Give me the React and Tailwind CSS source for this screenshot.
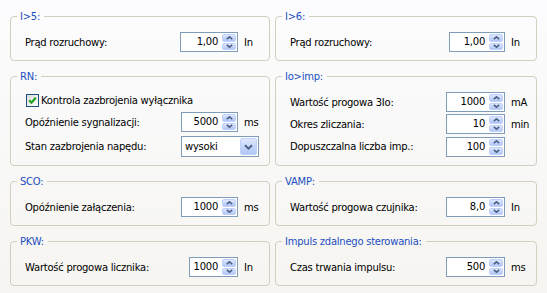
import React from 'react';

// XP-style settings panel: two columns of group boxes with spin fields

const font = { fontFamily: 'Tahoma, "DejaVu Sans", "Liberation Sans", sans-serif' };

const Arrow = ({ down }) => (
    <svg width="7" height="4" viewBox="0 0 7 4" className="block">
        <path
            d={down ? 'M0.8 0.8 L3.5 3.2 L6.2 0.8' : 'M0.8 3.2 L3.5 0.8 L6.2 3.2'}
            fill="none"
            stroke="#4d6185"
            strokeWidth="1.6"
        />
    </svg>
);

const SpinBtn = ({ down }) => (
    <div className="flex flex-1 items-center justify-center rounded-[2px] border border-[#bfd0fa] bg-linear-to-b from-[#dde7fe] to-[#b1c6f7]">
        <Arrow down={down} />
    </div>
);

const Spin = ({ value, width }) => (
    <div className={`flex h-[20px] shrink-0 border border-[#7f9db9] bg-white ${width}`}>
        <div className="flex-1 pr-[4px] text-right leading-[18px]">{value}</div>
        <div className="flex w-[15px] flex-col gap-[1px] py-[1px] pr-[1px]">
            <SpinBtn />
            <SpinBtn down />
        </div>
    </div>
);

// one label / field / unit row
const Row = ({ label, value, width, unit }) => (
    <div className="flex h-[20px] items-center">
        <span className="flex-1">{label}</span>
        <Spin value={value} width={width} />
        <span className="w-[31px] pl-[6px]">{unit}</span>
    </div>
);

const Group = ({ title, gap = 'gap-[3px]', children }) => (
    <fieldset className="rounded-[4px] border border-[#d0d0bf]">
        <legend className="ml-[6px] pl-[3px] pr-[4px] leading-[13px] text-[#1c4fc0]">{title}</legend>
        <div className={`flex flex-col pb-[8px] pl-[14px] pt-[9px] ${gap}`}>{children}</div>
    </fieldset>
);

const Check = () => (
    <div className="flex h-[13px] w-[13px] items-center justify-center border border-[#1c5180] bg-linear-to-br from-[#dcdcd7] to-white">
        <svg width="9" height="9" viewBox="0 0 9 9" className="block">
            <path d="M1.2 4.3 L3.5 6.7 L7.8 1.8" fill="none" stroke="#21a121" strokeWidth="2.2" />
        </svg>
    </div>
);

const Select = ({ value }) => (
    <div className="flex h-[21px] w-[78px] shrink-0 border border-[#7f9db9] bg-white">
        <span className="flex-1 pl-[3px] leading-[19px]">{value}</span>
        <div className="m-[1px] flex w-[17px] items-center justify-center rounded-[2px] border border-[#bfd0fa] bg-linear-to-b from-[#dde7fe] to-[#b1c6f7]">
            <svg width="9" height="6" viewBox="0 0 9 6" className="block">
                <path d="M1 1.2 L4.5 4.6 L8 1.2" fill="none" stroke="#4d6185" strokeWidth="2" />
            </svg>
        </div>
    </div>
);

export default function App() {
    return (
        <div
            className="h-[293px] w-[547px] overflow-hidden bg-linear-to-b from-[#fcfcfe] to-[#f6f5f1] pl-[10px] pt-[10px] text-[10px] tracking-[-0.25px] text-black"
            style={font}
        >
            <div className="grid grid-cols-[260px_262px] gap-x-[5px]">
                {/* left column */}
                <div className="flex flex-col gap-[9px]">
                    <Group title="I>5:">
                        <Row label="Prąd rozruchowy:" value="1,00" width="w-[58px]" unit="In" />
                    </Group>
                    <Group title="RN:" gap="gap-[4px]">
                        <div className="-mb-[1px] flex h-[17px] items-center gap-[2px] pl-[1px]">
                            <Check />
                            <span>Kontrola zazbrojenia wyłącznika</span>
                        </div>
                        <Row label="Opóźnienie sygnalizacji:" value="5000" width="w-[57px]" unit="ms" />
                        <div className="flex h-[21px] items-center pr-[10px]">
                            <span className="flex-1">Stan zazbrojenia napędu:</span>
                            <Select value="wysoki" />
                        </div>
                    </Group>
                    <Group title="SCO:">
                        <Row label="Opóźnienie załączenia:" value="1000" width="w-[57px]" unit="ms" />
                    </Group>
                    <Group title="PKW:">
                        <Row label="Wartość progowa licznika:" value="1000" width="w-[49px]" unit="In" />
                    </Group>
                </div>

                {/* right column */}
                <div className="flex flex-col gap-[9px]">
                    <Group title="I>6:">
                        <Row label="Prąd rozruchowy:" value="1,00" width="w-[56px]" unit="In" />
                    </Group>
                    <Group title="Io>imp:" gap="gap-[2px]">
                        <Row label="Wartość progowa 3Io:" value="1000" width="w-[59px]" unit="mA" />
                        <Row label="Okres zliczania:" value="10" width="w-[59px]" unit="min" />
                        <div className="flex h-[21px] items-center">
                            <span className="flex-1">Dopuszczalna liczba imp.:</span>
                            <Spin value="100" width="w-[59px]" />
                            <span className="w-[31px]" />
                        </div>
                    </Group>
                    <Group title="VAMP:">
                        <Row label="Wartość progowa czujnika:" value="8,0" width="w-[59px]" unit="In" />
                    </Group>
                    <Group title="Impuls zdalnego sterowania:">
                        <Row label="Czas trwania impulsu:" value="500" width="w-[59px]" unit="ms" />
                    </Group>
                </div>
            </div>
        </div>
    );
}
